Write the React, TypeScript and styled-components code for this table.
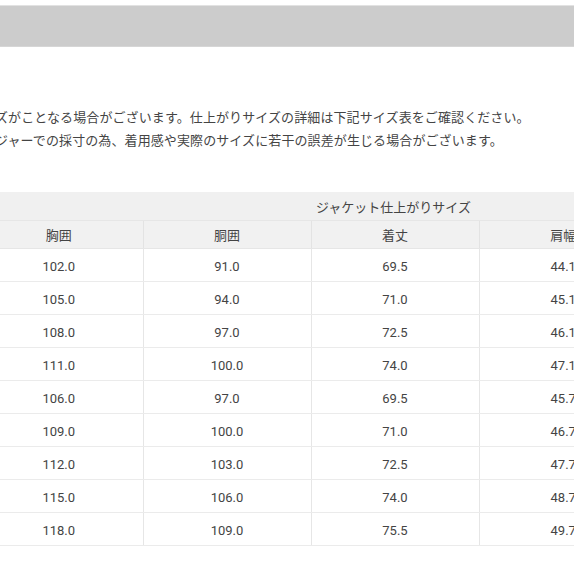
import React from 'react';
import styled, { createGlobalStyle } from 'styled-components';

const GlobalStyle = createGlobalStyle`
  html, body {
    margin: 0;
    padding: 0;
    background: #ffffff;
    overflow: hidden;
  }
  body {
    font-family: Roboto, "Noto Sans CJK JP", sans-serif;
    color: #444444;
  }
`;

const Page = styled.div`
  width: 574px;
  height: 574px;
  overflow: hidden;
`;

const TopBar = styled.div`
  margin-top: 5px;
  height: 42px;
  background: #cccccc;
  border-top: 1px solid #e2e2e2;
  border-bottom: 1px solid #d6d6d6;
  box-sizing: border-box;
`;

const Notes = styled.div`
  margin-top: 58px;
  margin-left: -5px;
  font-family: "Noto Sans CJK JP", sans-serif;
  font-size: 13px;
  letter-spacing: 0.1px;
  line-height: 23px;
  color: #444444;
  white-space: nowrap;
`;

const Table = styled.table`
  margin-top: 41px;
  margin-left: -25px;
  width: 672px;
  border-collapse: collapse;
  table-layout: fixed;
  font-size: 13px;
  color: #444444;
`;

const GroupCell = styled.th<{ $label?: boolean }>`
  height: 28px;
  padding: 0 0 0 ${(p) => (p.$label ? '5px' : '0')};
  background: #f0f0f0;
  border-bottom: 1px solid #e6e6e6;
  font-weight: normal;
  text-align: left;
  font-family: "Noto Sans CJK JP", sans-serif;
`;

const HeadCell = styled.th`
  height: 27px;
  padding: 0;
  background: #f1f1f1;
  border-left: 1px solid #e3e3e3;
  border-bottom: 1px solid #e6e6e6;
  font-weight: normal;
  text-align: center;
  font-family: "Noto Sans CJK JP", sans-serif;
  &:first-child {
    border-left: none;
  }
`;

const Cell = styled.td`
  height: 33px;
  padding: 2px 0 0;
  box-sizing: border-box;
  border-left: 1px solid #e6e6e6;
  border-bottom: 1px solid #ebebeb;
  text-align: center;
  &:first-child {
    border-left: none;
  }
`;

const columns = ['胸囲', '胴囲', '着丈', '肩幅'];

const rows = [
  ['102.0', '91.0', '69.5', '44.1'],
  ['105.0', '94.0', '71.0', '45.1'],
  ['108.0', '97.0', '72.5', '46.1'],
  ['111.0', '100.0', '74.0', '47.1'],
  ['106.0', '97.0', '69.5', '45.7'],
  ['109.0', '100.0', '71.0', '46.7'],
  ['112.0', '103.0', '72.5', '47.7'],
  ['115.0', '106.0', '74.0', '48.7'],
  ['118.0', '109.0', '75.5', '49.7'],
];

export default function App() {
  return (
    <Page>
      <GlobalStyle />
      <TopBar />
      <Notes>
        <div>ズがことなる場合がございます。仕上がりサイズの詳細は下記サイズ表をご確認ください。</div>
        <div>ジャーでの採寸の為、着用感や実際のサイズに若干の誤差が生じる場合がございます。</div>
      </Notes>
      <Table>
        <thead>
          <tr>
            <GroupCell />
            <GroupCell />
            <GroupCell $label colSpan={2}>ジャケット仕上がりサイズ</GroupCell>
          </tr>
          <tr>
            {columns.map((c) => (
              <HeadCell key={c}>{c}</HeadCell>
            ))}
          </tr>
        </thead>
        <tbody>
          {rows.map((r, i) => (
            <tr key={i}>
              {r.map((v, j) => (
                <Cell key={j}>{v}</Cell>
              ))}
            </tr>
          ))}
        </tbody>
      </Table>
    </Page>
  );
}
